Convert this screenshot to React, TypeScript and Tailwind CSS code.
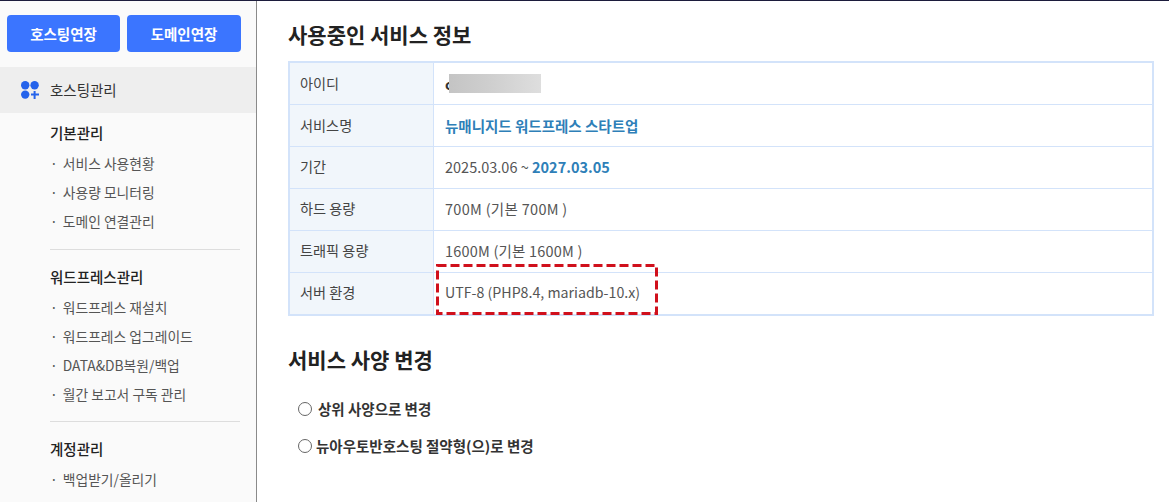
const font = { fontFamily: '"Noto Sans CJK KR", "Noto Sans", sans-serif' };

function Side({ children }: { children: string }) {
  return <div className="h-[29px] flex items-center pl-[50px] text-[13.8px] text-[#555] whitespace-nowrap">· <span className="ml-[5px]">{children}</span></div>;
}
function Heading({ children }: { children: string }) {
  return <div className="h-[20px] flex items-center pl-[50px] text-[14.5px] font-medium text-[#222] mb-[6px]">{children}</div>;
}
function Row({ label, children, last, low }: { label: string; children: React.ReactNode; last?: boolean; low?: boolean }) {
  return (
    <div className={`flex ${last ? "h-[41px]" : "h-[42px] border-b border-[#d3e3fa]"}`}>
      <div className={`w-[144px] shrink-0 bg-[#f1f6fb] border-r border-[#d3e3fa] flex items-center pl-[10px] text-[14.2px] text-[#444] ${low ? "" : "pb-[1px]"}`}>{label}</div>
      <div className={`flex-1 flex items-center pl-[11px] text-[14.5px] text-[#555] ${low ? "" : "pb-[2px]"}`}>{children}</div>
    </div>
  );
}

export default function App() {
  return (
    <div style={font} className="w-[1169px] h-[502px] overflow-hidden bg-white flex flex-col">
      <div className="h-px bg-[#1c1c3c]" />
      <div className="flex flex-1 min-h-0">
        <aside className="w-[257px] shrink-0 bg-[#fafafa] border-r border-[#8a8a8a] overflow-hidden">
          <div className="flex gap-[7px] pl-[7px] pt-[14px]">
            <button className="w-[113px] h-[37px] rounded-[4px] bg-[#3b75ff] text-white text-[14.5px] font-bold">호스팅연장</button>
            <button className="w-[114px] h-[37px] rounded-[4px] bg-[#3b75ff] text-white text-[14.5px] font-bold">도메인연장</button>
          </div>
          <div className="mt-[15px] h-[46px] bg-[#eeeeee] flex items-center pl-[21px] gap-[11px] text-[14.5px] text-[#333]">
            <svg width="18" height="18" viewBox="0 0 18 18" fill="#2563eb">
              <circle cx="4.2" cy="4.2" r="4.2" /><circle cx="13.6" cy="4.2" r="4.2" /><circle cx="4.2" cy="13.6" r="4.2" />
              <path d="M12.6 10h2v2.6H18v1.9h-3.4V18h-2v-3.5H10v-1.9h2.6z" />
            </svg>
            호스팅관리
          </div>
          <div className="pt-[10px]">
            <Heading>기본관리</Heading>
            <Side>서비스 사용현황</Side>
            <Side>사용량 모니터링</Side>
            <Side>도메인 연결관리</Side>
            <div className="ml-[50px] mr-[16px] mt-[13px] mb-[17px] border-t border-[#ddd]" />
            <Heading>워드프레스관리</Heading>
            <Side>워드프레스 재설치</Side>
            <Side>워드프레스 업그레이드</Side>
            <Side>DATA&amp;DB복원/백업</Side>
            <Side>월간 보고서 구독 관리</Side>
            <div className="ml-[50px] mr-[16px] mt-[12px] mb-[17px] border-t border-[#ddd]" />
            <Heading>계정관리</Heading>
            <Side>백업받기/올리기</Side>
          </div>
        </aside>
        <main className="flex-1 pl-[31px] pr-[15px] min-w-0">
          <h2 className="mt-[18px] h-[32px] flex items-center text-[21px] font-bold text-[#222]">사용중인 서비스 정보</h2>
          <div className="relative mt-[10px] border-2 border-[#d3e3fa]">
            <Row label="아이디" low>
              <span className="relative flex items-center h-[19px] font-bold text-[#333]">c<span className="absolute left-[4px] top-0 w-[92px] h-[19px] bg-gradient-to-r from-[#c4c4c4] via-[#d0d0d0] to-[#dedede]" /></span>
            </Row>
            <Row label="서비스명" low><span className="font-bold text-[#2e7fb8]">뉴매니지드 워드프레스 스타트업</span></Row>
            <Row label="기간"><span>2025.03.06 ~ <b className="text-[#2e7fb8]">2027.03.05</b></span></Row>
            <Row label="하드 용량"><span className="tracking-[0.3px]">700M (기본 700M )</span></Row>
            <Row label="트래픽 용량"><span className="tracking-[0.2px]">1600M (기본 1600M )</span></Row>
            <Row label="서버 환경" last><span className="text-[14.2px]">UTF-8 (PHP8.4, mariadb-10.x)</span></Row>
            <svg className="absolute left-[146px] top-[201px]" width="222" height="51" viewBox="0 0 222 51" fill="none">
              <rect x="1.5" y="1.5" width="219" height="48" stroke="#d0101c" strokeWidth="3" strokeDasharray="9 4" />
            </svg>
          </div>
          <h2 className="mt-[28px] h-[32px] flex items-center text-[21px] font-bold text-[#222]">서비스 사양 변경</h2>
          <div className="mt-[21px] pl-[10px] flex items-center h-[24px] text-[14.5px] font-bold text-[#333]">
            <span className="w-[14px] h-[14px] rounded-full border border-[#666] mr-[6px]" />상위 사양으로 변경
          </div>
          <div className="mt-[13px] pl-[10px] flex items-center h-[24px] text-[14.5px] font-bold text-[#333]">
            <span className="w-[14px] h-[14px] rounded-full border border-[#666] mr-[4px]" />뉴아우토반호스팅 절약형(으)로 변경
          </div>
        </main>
      </div>
    </div>
  );
}
